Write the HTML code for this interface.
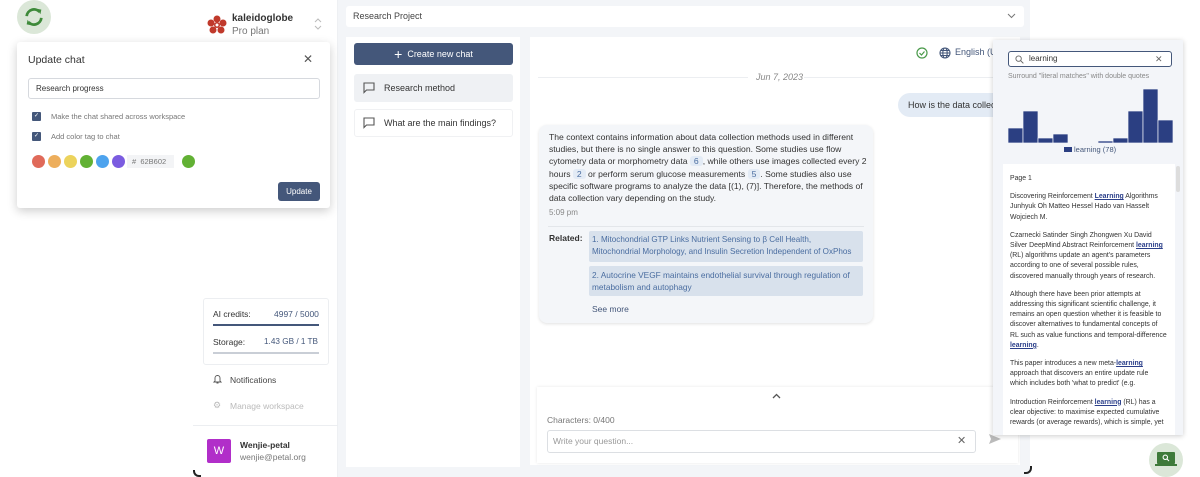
<!DOCTYPE html>
<html><head><meta charset="utf-8"><style>
*{box-sizing:border-box;margin:0;padding:0}
body{width:1200px;height:477px;overflow:hidden;background:#fff;font-family:"Liberation Sans",sans-serif;color:#333;position:relative}
.a{position:absolute}
.hl{color:#2b3f8a;font-weight:bold;text-decoration:underline}
.cite{background:#e3ebf5;color:#4a6da0;padding:0 4px;border-radius:3px}
</style></head><body>
<div class="a" style="left:338px;top:0;width:692px;height:477px;background:#f3f5f8"></div>
<div class="a" style="left:193px;top:0;width:145px;height:477px;background:#fff;border-right:1px solid #eef0f3"></div>
<div class="a" style="left:193px;top:470px;width:8px;height:7px;border-left:2px solid #222;border-bottom:2px solid #222;border-bottom-left-radius:6px"></div>
<div class="a" style="left:1024px;top:466px;width:8px;height:8px;border-right:2px solid #222;border-bottom:2px solid #222;border-bottom-right-radius:6px"></div>

<div class="a" style="left:17px;top:0;width:34px;height:34px;border-radius:50%;background:#dbe7d8"></div>
<svg class="a" style="left:23px;top:6px" width="22" height="22" viewBox="0 0 24 24"><path d="M4 11a8 8 0 0 1 14-4.5" stroke="#3e8a3a" stroke-width="3" fill="none"/><path d="M20 13a8 8 0 0 1-14 4.5" stroke="#3e8a3a" stroke-width="3" fill="none"/><path d="M15 3l5 1-1 5z M9 21l-5-1 1-5z" fill="#3e8a3a"/></svg>

<svg class="a" style="left:207px;top:15px" width="20" height="20" viewBox="0 0 20 20"><g fill="#c0392b"><circle cx="10" cy="4" r="3.5"/><circle cx="16" cy="8" r="3.5"/><circle cx="14" cy="15" r="3.5"/><circle cx="6" cy="15" r="3.5"/><circle cx="4" cy="8" r="3.5"/><circle cx="10" cy="10" r="3"/></g><circle cx="10" cy="10" r="1.5" fill="#fff"/></svg>
<div class="a" style="left:232px;top:13px;font-size:10px;font-weight:bold;color:#333">kaleidoglobe</div>
<div class="a" style="left:232px;top:26px;font-size:10px;color:#777">Pro plan</div>
<svg class="a" style="left:314px;top:17px" width="8" height="14" viewBox="0 0 8 14"><path d="M1 5l3-3 3 3M1 9l3 3 3-3" stroke="#bbb" fill="none"/></svg>

<div class="a" style="left:346px;top:6px;width:678px;height:21px;background:#fff;border-radius:3px;font-size:9px;color:#444;padding:5px 0 0 7px">Research Project</div>
<svg class="a" style="left:1007px;top:13px" width="9" height="6" viewBox="0 0 9 6"><path d="M1 1l3.5 3.5L8 1" stroke="#777" fill="none"/></svg>

<div class="a" style="left:346px;top:37px;width:174px;height:430px;background:#fff"></div>
<div class="a" style="left:354px;top:43px;width:159px;height:22px;background:#44577a;border-radius:3px;color:#fff;font-size:9px;text-align:center;line-height:22px"><span style="font-size:14px;vertical-align:-2px">+</span>&nbsp; Create new chat</div>
<div class="a" style="left:354px;top:74px;width:159px;height:28px;background:#eff1f4;border-radius:3px;font-size:9px;color:#333;line-height:28px;padding-left:30px">Research method</div>
<div class="a" style="left:354px;top:109px;width:159px;height:28px;border:1px solid #f0f1f3;border-radius:3px;font-size:9px;color:#333;line-height:27px;padding-left:29px">What are the main findings?</div>
<svg class="a" style="left:363px;top:82px" width="12" height="12" viewBox="0 0 12 12"><path d="M1 1h10v7H3.5L1 10.5z" stroke="#555" fill="none" stroke-width="1.1"/></svg>
<svg class="a" style="left:363px;top:117px" width="12" height="12" viewBox="0 0 12 12"><path d="M1 1h10v7H3.5L1 10.5z" stroke="#555" fill="none" stroke-width="1.1"/></svg>

<div class="a" style="left:530px;top:37px;width:490px;height:428px;background:#fff"></div>
<svg class="a" style="left:916px;top:47px" width="12" height="12" viewBox="0 0 12 12"><circle cx="6" cy="6" r="5" stroke="#4a9a4a" fill="none" stroke-width="1.2"/><path d="M3.5 6l2 2 3-3.5" stroke="#4a9a4a" fill="none" stroke-width="1.2"/></svg>
<svg class="a" style="left:939px;top:47px" width="12" height="12" viewBox="0 0 12 12"><g stroke="#44577a" fill="none" stroke-width="1.1"><circle cx="6" cy="6" r="5"/><ellipse cx="6" cy="6" rx="2.2" ry="5"/><path d="M1 6h10M2 3.5h8M2 8.5h8"/></g></svg>
<div class="a" style="left:955px;top:47px;font-size:9px;color:#44577a">English (U</div>
<div class="a" style="left:538px;top:77px;width:210px;height:1px;background:#eceef1"></div>
<div class="a" style="left:804px;top:77px;width:190px;height:1px;background:#eceef1"></div>
<div class="a" style="left:756px;top:72px;font-size:9px;color:#888;font-style:italic">Jun 7, 2023</div>
<div class="a" style="left:898px;top:93px;width:110px;height:24px;background:#e3ebf5;border-radius:12px 0 0 12px;font-size:9px;color:#333;line-height:24px;padding-left:10px;white-space:nowrap;overflow:hidden">How is the data collect</div>

<div class="a" style="left:539px;top:125px;width:334px;height:198px;background:#f4f6f9;border-radius:8px;box-shadow:0 1px 3px rgba(0,0,0,.12)"></div>
<div class="a" style="left:549px;top:131px;width:320px;font-size:8.6px;line-height:12.2px;color:#333">The context contains information about data collection methods used in different studies, but there is no single answer to this question. Some studies use flow cytometry data or morphometry data <span class="cite">6</span>, while others use images collected every 2 hours <span class="cite">2</span> or perform serum glucose measurements <span class="cite">5</span>. Some studies also use specific software programs to analyze the data [(1), (7)]. Therefore, the methods of data collection vary depending on the study.</div>
<div class="a" style="left:549px;top:208px;font-size:8px;color:#888">5:09 pm</div>
<div class="a" style="left:548px;top:226px;width:316px;height:1px;background:#e3e6ea"></div>
<div class="a" style="left:549px;top:233px;font-size:8.5px;font-weight:bold;color:#333">Related:</div>
<div class="a" style="left:589px;top:231px;width:274px;height:31px;background:#d8e1ec;border-radius:2px;font-size:8.1px;line-height:12.3px;color:#4a6da0;padding:3px 3px;white-space:nowrap">1. Mitochondrial GTP Links Nutrient Sensing to β Cell Health,<br>Mitochondrial Morphology, and Insulin Secretion Independent of OxPhos</div>
<div class="a" style="left:589px;top:266px;width:274px;height:30px;background:#d8e1ec;border-radius:2px;font-size:8.3px;line-height:12.3px;color:#4a6da0;padding:3px 3px">2. Autocrine VEGF maintains endothelial survival through regulation of metabolism and autophagy</div>
<div class="a" style="left:592px;top:304px;font-size:8.5px;color:#44577a">See more</div>

<div class="a" style="left:537px;top:387px;width:481px;height:76px;background:#fff;box-shadow:0 0 3px rgba(0,0,0,.1)"></div>
<svg class="a" style="left:772px;top:393px" width="9" height="6" viewBox="0 0 9 6"><path d="M1 5l3.5-3.5L8 5" stroke="#555" fill="none" stroke-width="1.3"/></svg>
<div class="a" style="left:547px;top:415px;font-size:8.5px;color:#777">Characters: 0/400</div>
<div class="a" style="left:547px;top:430px;width:429px;height:23px;border:1px solid #dcdfe3;border-radius:3px;font-size:8.5px;color:#999;line-height:21px;padding-left:5px">Write your question...</div>
<div class="a" style="left:957px;top:434px;font-size:11px;color:#666">✕</div>
<svg class="a" style="left:989px;top:434px" width="12" height="10" viewBox="0 0 12 10"><path d="M0 0l12 5-12 5 2-5z" fill="#bbb"/></svg>

<div class="a" style="left:993px;top:40px;width:190px;height:395px;background:#f3f5f9;box-shadow:0 1px 5px rgba(0,0,0,.2)"></div>
<div class="a" style="left:1008px;top:51px;width:164px;height:16px;border:1.3px solid #44577a;border-radius:3px;background:#fff;font-size:8px;color:#333;line-height:13px;padding-left:20px">learning</div>
<svg class="a" style="left:1015px;top:55px" width="9" height="9" viewBox="0 0 10 10"><circle cx="4" cy="4" r="3" stroke="#666" fill="none"/><path d="M6.3 6.3l3 3" stroke="#666"/></svg>
<div class="a" style="left:1155px;top:54px;font-size:9px;color:#666">✕</div>
<div class="a" style="left:1008px;top:73px;font-size:7px;color:#888">Surround "literal matches" with double quotes</div>
<svg class="a" style="left:1008px;top:89px" width="165" height="55">
<g fill="#2b3f82" stroke="#f3f5f9" stroke-width=".7">
<rect x="0" y="39" width="15" height="15"/><rect x="15" y="22" width="15" height="32"/><rect x="30" y="49" width="15" height="5"/><rect x="45" y="45" width="15" height="9"/>
<rect x="90" y="52" width="15" height="2"/><rect x="105" y="49" width="15" height="5"/><rect x="120" y="22" width="15" height="32"/><rect x="135" y="0" width="15" height="54"/><rect x="150" y="31" width="15" height="23"/></g></svg>
<div class="a" style="left:1064px;top:147px;width:8px;height:5px;background:#2b3f82"></div>
<div class="a" style="left:1074px;top:145px;font-size:7.5px;color:#44577a">learning (78)</div>

<div class="a" style="left:1003px;top:164px;width:172px;height:271px;background:#fff;overflow:hidden;font-size:6.9px;line-height:10.2px;color:#333;padding:10px 8px 0 7px">
<p style="margin-bottom:8px">Page 1</p>
<p style="margin-bottom:8px">Discovering Reinforcement <span class="hl">Learning</span> Algorithms Junhyuk Oh Matteo Hessel Hado van Hasselt Wojciech M.</p>
<p style="margin-bottom:8px">Czarnecki Satinder Singh Zhongwen Xu David Silver DeepMind Abstract Reinforcement <span class="hl">learning</span> (RL) algorithms update an agent's parameters according to one of several possible rules, discovered manually through years of research.</p>
<p style="margin-bottom:8px">Although there have been prior attempts at addressing this significant scientific challenge, it remains an open question whether it is feasible to discover alternatives to fundamental concepts of RL such as value functions and temporal-difference <span class="hl">learning</span>.</p>
<p style="margin-bottom:8px">This paper introduces a new meta-<span class="hl">learning</span> approach that discovers an entire update rule which includes both 'what to predict' (e.g.</p>
<p>Introduction Reinforcement <span class="hl">learning</span> (RL) has a clear objective: to maximise expected cumulative rewards (or average rewards), which is simple, yet</p>
</div>
<div class="a" style="left:1176px;top:166px;width:4px;height:26px;background:#ddd;border-radius:2px"></div>

<div class="a" style="left:1149px;top:443px;width:34px;height:34px;border-radius:50%;background:#dbe7d8"></div>
<div class="a" style="left:1157px;top:452px;width:18px;height:12px;background:#3e7a3a;border-radius:1px"></div>
<div class="a" style="left:1155px;top:464px;width:22px;height:2px;background:#3e7a3a"></div>
<svg class="a" style="left:1162px;top:454px" width="8" height="8" viewBox="0 0 8 8"><circle cx="3.3" cy="3.3" r="2.2" stroke="#fff" fill="none" stroke-width="1.1"/><path d="M5 5l2 2" stroke="#fff" stroke-width="1.1"/></svg>

<div class="a" style="left:203px;top:298px;width:126px;height:67px;border:1px solid #eceef1;border-radius:3px"></div>
<div class="a" style="left:213px;top:309px;font-size:8.5px;color:#333">AI credits:</div>
<div class="a" style="left:274px;top:309px;font-size:8.5px;color:#44577a">4997 / 5000</div>
<div class="a" style="left:213px;top:324px;width:106px;height:2px;background:#44577a"></div>
<div class="a" style="left:213px;top:337px;font-size:8.5px;color:#333">Storage:</div>
<div class="a" style="left:264px;top:337px;font-size:8.2px;color:#44577a">1.43 GB / 1 TB</div>
<div class="a" style="left:213px;top:352px;width:106px;height:2px;background:#c9ced6"></div>
<svg class="a" style="left:213px;top:374px" width="9" height="10" viewBox="0 0 9 10"><path d="M2 7V4a2.5 2.5 0 0 1 5 0v3l1 1H1z M3.5 9h2" stroke="#555" fill="none" stroke-width=".9"/></svg>
<div class="a" style="left:230px;top:375px;font-size:8.5px;color:#444">Notifications</div>
<div class="a" style="left:213px;top:400px;font-size:9px;color:#bbb">⚙</div>
<div class="a" style="left:230px;top:401px;font-size:8.5px;color:#bbb">Manage workspace</div>
<div class="a" style="left:193px;top:425px;width:145px;height:1px;background:#eceef1"></div>
<div class="a" style="left:207px;top:439px;width:24px;height:24px;background:#b12ec9;border-radius:2px;color:#fff;font-size:11px;text-align:center;line-height:24px">W</div>
<div class="a" style="left:240px;top:440px;font-size:8.5px;font-weight:bold;color:#333">Wenjie-petal</div>
<div class="a" style="left:240px;top:452px;font-size:8.5px;color:#777">wenjie@petal.org</div>

<div class="a" style="left:17px;top:42px;width:313px;height:166px;background:#fff;border-radius:3px;box-shadow:0 3px 10px rgba(0,0,0,.2)"></div>
<div class="a" style="left:28px;top:54px;font-size:10.5px;color:#333">Update chat</div>
<div class="a" style="left:303px;top:52px;font-size:12px;color:#555">✕</div>
<div class="a" style="left:28px;top:78px;width:292px;height:21px;border:1px solid #d6d9de;border-radius:3px;font-size:8px;color:#333;line-height:19px;padding-left:7px">Research progress</div>
<div class="a" style="left:32px;top:112px;width:9px;height:9px;background:#44577a;border-radius:1px;color:#fff;font-size:6px;line-height:9px;text-align:center">✓</div>
<div class="a" style="left:51px;top:112px;font-size:7.5px;color:#777">Make the chat shared across workspace</div>
<div class="a" style="left:32px;top:132px;width:9px;height:9px;background:#44577a;border-radius:1px;color:#fff;font-size:6px;line-height:9px;text-align:center">✓</div>
<div class="a" style="left:51px;top:132px;font-size:7.5px;color:#777">Add color tag to chat</div>
<div class="a" style="left:32px;top:155px;width:13px;height:13px;border-radius:50%;background:#e06a5a"></div>
<div class="a" style="left:48px;top:155px;width:13px;height:13px;border-radius:50%;background:#edae5c"></div>
<div class="a" style="left:64px;top:155px;width:13px;height:13px;border-radius:50%;background:#ecd35c"></div>
<div class="a" style="left:80px;top:155px;width:13px;height:13px;border-radius:50%;background:#62b134"></div>
<div class="a" style="left:96px;top:155px;width:13px;height:13px;border-radius:50%;background:#4da3ee"></div>
<div class="a" style="left:112px;top:155px;width:13px;height:13px;border-radius:50%;background:#7b5ce0"></div>
<div class="a" style="left:127px;top:155px;width:47px;height:13px;background:#f3f4f6;font-size:7.5px;color:#777;line-height:13px;padding-left:5px">#&nbsp; 62B602</div>
<div class="a" style="left:182px;top:155px;width:13px;height:13px;border-radius:50%;background:#62b134"></div>
<div class="a" style="left:278px;top:182px;width:42px;height:19px;background:#44577a;border-radius:3px;color:#fff;font-size:8px;text-align:center;line-height:19px">Update</div>
</body></html>
